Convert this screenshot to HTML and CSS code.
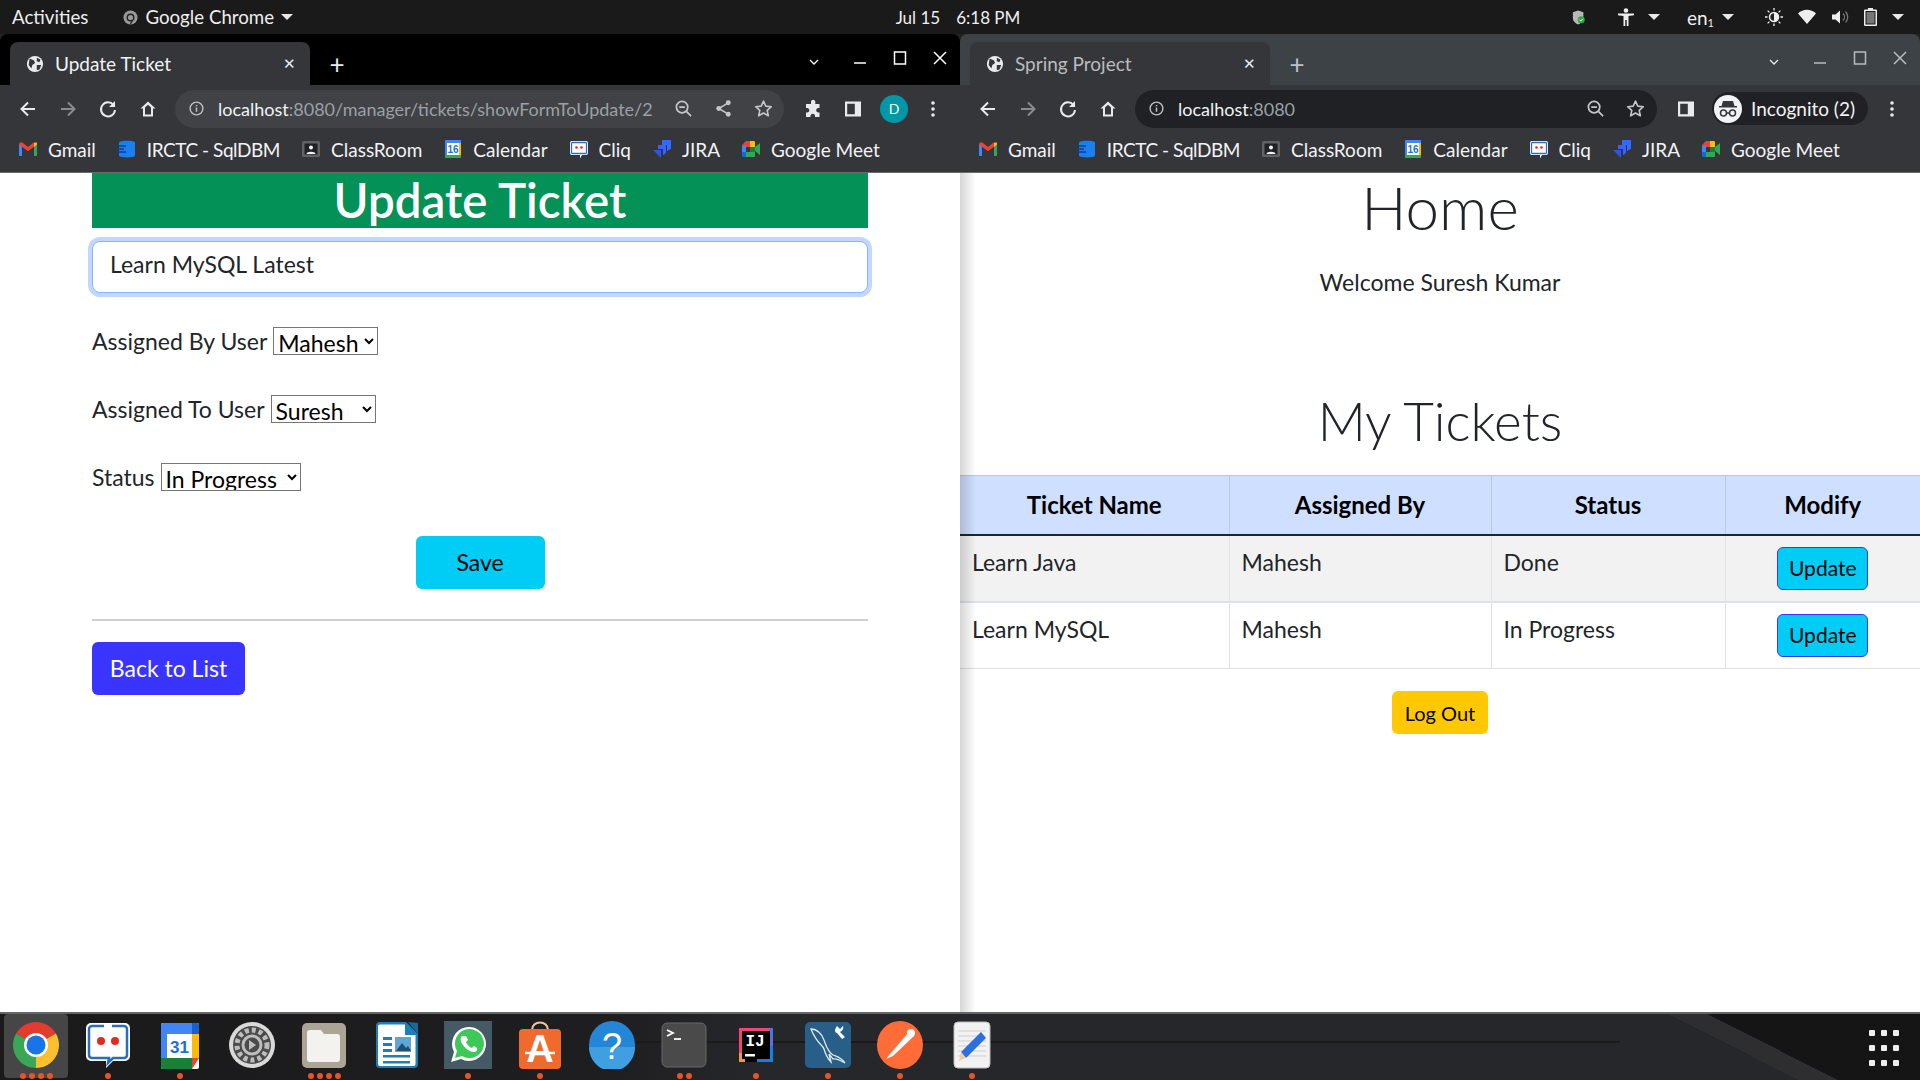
FILE: index.html
```html
<!DOCTYPE html>
<html lang="en">
<head>
  <meta charset="UTF-8">
  <title>Update Ticket</title>
  <link rel="stylesheet" href="styles.css">
</head>
<body>
  <svg class="sprites" aria-hidden="true">
    <symbol id="i-globe" viewBox="0 0 20 20"><circle cx="10" cy="10" r="9" fill="#e8eaed"/><path d="M4 4l5 2 1 3-3 2-1 4-3-4zM12 3l4 2-1 3-3-1zM12 11l5 0-2 5-3 1z" fill="#35363a"/></symbol>
    <symbol id="i-back" viewBox="0 0 20 20"><path d="M17 10H4M10 3.5L3.5 10l6.500 6.500" fill="none" stroke="currentColor" stroke-width="2"/></symbol>
    <symbol id="i-forward" viewBox="0 0 20 20"><path d="M3 10h13M10 3.500l6.500 6.500-6.500 6.500" fill="none" stroke="currentColor" stroke-width="2"/></symbol>
    <symbol id="i-reload" viewBox="0 0 20 20"><path d="M15.500 6A7 7 0 1 0 17 11" fill="none" stroke="currentColor" stroke-width="2"/><path d="M17 2v6h-6z" fill="currentColor"/></symbol>
    <symbol id="i-home" viewBox="0 0 20 20"><path d="M10 2.500L2.500 9.500h2.500v8h10v-8h2.500zM7 15.500v-7l3-2.800 3 2.800v7z" fill="currentColor" fill-rule="evenodd"/></symbol>
    <symbol id="i-info" viewBox="0 0 16 16"><circle cx="8" cy="8" r="6.800" fill="none" stroke="currentColor" stroke-width="1.500"/><path d="M7.200 7h1.600v4.500H7.200zM7.200 4.200h1.600v1.500H7.200z" fill="currentColor"/></symbol>
    <symbol id="i-zoomout" viewBox="0 0 20 20"><circle cx="8.500" cy="8.500" r="6" fill="none" stroke="currentColor" stroke-width="1.800"/><path d="M13 13l5 5M5.500 8.500h6" fill="none" stroke="currentColor" stroke-width="1.800"/></symbol>
    <symbol id="i-share" viewBox="0 0 20 20"><circle cx="15" cy="4" r="2.600" fill="currentColor"/><circle cx="5" cy="10" r="2.600" fill="currentColor"/><circle cx="15" cy="16" r="2.600" fill="currentColor"/><path d="M15 4L5 10l10 6" fill="none" stroke="currentColor" stroke-width="1.600"/></symbol>
    <symbol id="i-star" viewBox="0 0 20 20"><path d="M10 2.200l2.400 5.300 5.800.6-4.300 3.900 1.200 5.700L10 14.800l-5.100 2.900 1.200-5.700L1.800 8.100l5.800-.6z" fill="none" stroke="currentColor" stroke-width="1.700" stroke-linejoin="round"/></symbol>
    <symbol id="i-puzzle" viewBox="0 0 20 20"><path d="M8 2.500a2.200 2.200 0 0 1 4.300 0V5h4.200v4h-1.500a2.300 2.300 0 0 0 0 4.500h1.500v4.500h-4.500v-1.500a2.300 2.300 0 0 0-4.500 0V18H3v-4.500h1.500a2.300 2.300 0 0 0 0-4.500H3V5h5z" fill="currentColor"/></symbol>
    <symbol id="i-panel" viewBox="0 0 20 20"><path d="M2 2.500h16v15H2zM4.200 4.700v10.600h7.600V4.700z" fill="currentColor" fill-rule="evenodd"/></symbol>
    <symbol id="i-dots" viewBox="0 0 20 20"><circle cx="10" cy="4" r="1.800" fill="currentColor"/><circle cx="10" cy="10" r="1.800" fill="currentColor"/><circle cx="10" cy="16" r="1.800" fill="currentColor"/></symbol>
    <symbol id="i-incognito" viewBox="0 0 28 28"><circle cx="14" cy="14" r="14" fill="#f1f3f4"/><path d="M9 6h10l1.500 5H23v1.500H5V11h2.500z" fill="#35363a"/><circle cx="9.500" cy="18" r="3" fill="none" stroke="#35363a" stroke-width="1.500"/><circle cx="18.500" cy="18" r="3" fill="none" stroke="#35363a" stroke-width="1.500"/><path d="M12.500 18h3" stroke="#35363a" stroke-width="1.500"/></symbol>

    <symbol id="b-gmail" viewBox="0 0 20 20"><path d="M1 5.500l3-1V17H2a1 1 0 0 1-1-1z" fill="#4285f4"/><path d="M19 5.500l-3-1V17h2a1 1 0 0 0 1-1z" fill="#34a853"/><path d="M1 5.500C1 3 3.300 2.500 5 4l5 4 5-4c1.700-1.500 4-1 4 1.500l-3 2.300-6 4.500-6-4.500z" fill="#ea4335"/><path d="M16 4l3-.6v2.100L16 8z" fill="#fbbc04"/></symbol>
    <symbol id="b-sqldbm" viewBox="0 0 20 20"><path d="M2 3.500C2 1 18 1 18 3.500v13C18 19 2 19 2 16.500z" fill="#1a7ff0"/><path d="M1 7h8M1 10h6M1 13h8" stroke="#0d3f8f" stroke-width="1.300"/></symbol>
    <symbol id="b-classroom" viewBox="0 0 20 20"><rect x="1" y="2" width="18" height="16" rx="1.500" fill="#5f6368"/><rect x="3.500" y="4.500" width="13" height="11" fill="#202124"/><circle cx="10" cy="8.500" r="2" fill="#f1f3f4"/><path d="M5.500 15c0-3 9-3 9 0z" fill="#f1f3f4"/></symbol>
    <symbol id="b-calendar" viewBox="0 0 20 20"><rect x="2" y="1" width="16" height="18" rx="1" fill="#fff"/><path d="M2 1h16v3H2z" fill="#4285f4"/><path d="M2 4h2v12H2z" fill="#4285f4"/><path d="M16 4h2v12h-2z" fill="#fbbc04"/><path d="M2 16h16v3H2z" fill="#34a853"/><text x="10" y="14" text-anchor="middle" class="cal-day">16</text></symbol>
    <symbol id="b-cliq" viewBox="0 0 20 20"><path d="M3 2h14a2 2 0 0 1 2 2v10a2 2 0 0 1-2 2h-4l-2 3.500V16H3a2 2 0 0 1-2-2V4a2 2 0 0 1 2-2z" fill="#fff"/><path d="M3.500 3.500h13a1 1 0 0 1 1 1v9a1 1 0 0 1-1 1h-13a1 1 0 0 1-1-1v-9a1 1 0 0 1 1-1z" fill="none" stroke="#2a6fc0" stroke-width="1.300"/><circle cx="7.500" cy="8.500" r="1.300" fill="#e02020"/><circle cx="12.500" cy="8.500" r="1.300" fill="#e02020"/></symbol>
    <symbol id="b-jira" viewBox="0 0 20 20"><path d="M10 1h9v9l-4 2V6h-5z" fill="#2f6bff"/><path d="M6 6h8v8l-3 2v-6H6z" fill="#3b62f5"/><path d="M1 11h8v8l-3-3-2-2z" fill="#2c55e8"/></symbol>
    <symbol id="b-meet" viewBox="0 0 20 20"><path d="M5 2h8v6H1V6z" fill="#ea4335"/><path d="M9 2h4a1 1 0 0 1 1 1v5H9z" fill="#fbbc04"/><path d="M1 7h4v6H1z" fill="#4285f4"/><path d="M1 13h4v5H2a1 1 0 0 1-1-1z" fill="#1967d2"/><path d="M5 13h9v4a1 1 0 0 1-1 1H5z" fill="#34a853"/><path d="M9 8h5v5H9z" fill="#188038"/><path d="M14 8l5-4v12l-5-4z" fill="#34a853"/></symbol>
  </svg>

  <div class="desktop">
    <header class="topbar">
      <div class="topbar-left">
        <span>Activities</span>
        <span class="app-menu">
          <svg class="app-icon" viewBox="0 0 16 16"><circle cx="8" cy="8" r="7.500" fill="#9a9a9a"/><circle cx="8" cy="8" r="3.500" fill="none" stroke="#222" stroke-width="1.500"/><path d="M10 11l-2 4" stroke="#222" stroke-width="1.300"/></svg>
          Google Chrome
          <i class="caret"></i>
        </span>
      </div>
      <div class="clock"><span>Jul 15</span><span>6:18 PM</span></div>
      <div class="tray">
        <svg class="tray-shield" viewBox="0 0 16 18"><path d="M1 3l6-2 6 2v7c0 3-3 5.500-6 7-3-1.500-6-4-6-7z" fill="#b8b8b8"/><circle cx="10.500" cy="11.500" r="4" fill="#2fa84f"/><path d="M8.500 11.500l1.500 1.500 2.500-2.500" stroke="#fff" stroke-width="1" fill="none"/></svg>
        <span class="tray-group">
          <svg class="tray-icon" viewBox="0 0 18 18"><circle cx="9" cy="2.500" r="2.300" fill="#eee"/><path d="M1 5.500h16v1.800l-5.500.7V18H9.700v-6H8.300v6H6.500V8L1 7.300z" fill="#eee"/></svg>
          <i class="caret"></i>
        </span>
        <span class="tray-group tray-lang">
          <span class="lang">en<sub>1</sub></span>
          <i class="caret"></i>
        </span>
        <span class="tray-group tray-status">
          <svg class="tray-icon" viewBox="0 0 18 18"><circle cx="9" cy="9" r="4.500" fill="#222" stroke="#eee" stroke-width="1.500"/><path d="M9 4.500a4.500 4.500 0 0 1 0 9z" fill="#eee"/><path d="M9 0v2.500M9 15.500V18M0 9h2.500M15.500 9H18M2.600 2.600l1.800 1.800M13.600 13.600l1.800 1.800M15.400 2.600l-1.800 1.800M4.400 13.600l-1.800 1.800" stroke="#eee" stroke-width="1.300"/></svg>
          <svg class="tray-icon" viewBox="0 0 18 18"><path d="M0 5.500C5 .5 13 .5 18 5.500L9 16z" fill="#eee"/></svg>
          <svg class="tray-icon" viewBox="0 0 18 18"><path d="M1 6.500h3.500L9 2.500v13l-4.500-4H1z" fill="#eee"/><path d="M12 5.500a5 5 0 0 1 0 7M14.500 3.500a8 8 0 0 1 0 11" stroke="#777" stroke-width="1.300" fill="none"/></svg>
          <svg class="tray-battery" viewBox="0 0 13 18"><path d="M4 0h5v1.500h3a1 1 0 0 1 1 1V17a1 1 0 0 1-1 1H1a1 1 0 0 1-1-1V2.500a1 1 0 0 1 1-1h3zM1.500 3v13.500h10V3z" fill="#eee" fill-rule="evenodd"/><path d="M2.500 4h8v11.500h-8z" fill="#777"/></svg>
          <i class="caret"></i>
        </span>
      </div>
    </header>

    <main class="windows">
      <section class="window window-focused">
        <div class="tabstrip">
          <div class="tab">
            <svg class="favicon"><use href="#i-globe"/></svg>
            <span class="tab-title">Update Ticket</span>
            <span class="tab-close">✕</span>
          </div>
          <span class="tab-new">+</span>
          <div class="window-controls">
            <svg class="ctl-chevron" viewBox="0 0 10 6"><path d="M1 1l4 4 4-4" fill="none" stroke="currentColor" stroke-width="1.300"/></svg>
            <svg class="ctl" viewBox="0 0 14 14"><path d="M1 12h12" stroke="currentColor" stroke-width="1.500"/></svg>
            <svg class="ctl" viewBox="0 0 14 14"><path d="M1.500 1h11v12h-11z" fill="none" stroke="currentColor" stroke-width="1.500"/></svg>
            <svg class="ctl" viewBox="0 0 14 14"><path d="M1 1l12 12M13 1L1 13" stroke="currentColor" stroke-width="1.500"/></svg>
          </div>
        </div>
        <div class="toolbar">
          <svg class="nav-btn"><use href="#i-back"/></svg>
          <svg class="nav-btn nav-off"><use href="#i-forward"/></svg>
          <svg class="nav-btn"><use href="#i-reload"/></svg>
          <svg class="nav-btn"><use href="#i-home"/></svg>
          <div class="omnibox">
            <svg class="omni-info"><use href="#i-info"/></svg>
            <span class="url"><b>localhost</b>:8080/manager/tickets/showFormToUpdate/2</span>
            <svg class="omni-btn"><use href="#i-zoomout"/></svg>
            <svg class="omni-btn"><use href="#i-share"/></svg>
            <svg class="omni-btn"><use href="#i-star"/></svg>
          </div>
          <svg class="tool-btn tool-puzzle"><use href="#i-puzzle"/></svg>
          <svg class="tool-btn"><use href="#i-panel"/></svg>
          <span class="avatar">D</span>
          <svg class="tool-btn"><use href="#i-dots"/></svg>
        </div>
        <nav class="bookmarks">
          <span class="bookmark"><svg><use href="#b-gmail"/></svg>Gmail</span>
          <span class="bookmark bookmark-tight"><svg><use href="#b-sqldbm"/></svg>IRCTC - SqlDBM</span>
          <span class="bookmark"><svg><use href="#b-classroom"/></svg>ClassRoom</span>
          <span class="bookmark"><svg><use href="#b-calendar"/></svg>Calendar</span>
          <span class="bookmark"><svg><use href="#b-cliq"/></svg>Cliq</span>
          <span class="bookmark"><svg><use href="#b-jira"/></svg>JIRA</span>
          <span class="bookmark"><svg><use href="#b-meet"/></svg>Google Meet</span>
        </nav>
        <div class="page page-form">
          <h1 class="form-title">Update Ticket</h1>
          <input class="form-input" type="text" value="Learn MySQL Latest">
          <div class="form-row">
            <label>Assigned By User</label>
            <select class="select-user"><option>Mahesh</option></select>
          </div>
          <div class="form-row">
            <label>Assigned To User</label>
            <select class="select-user"><option>Suresh</option></select>
          </div>
          <div class="form-row">
            <label>Status</label>
            <select class="select-status"><option>In Progress</option></select>
          </div>
          <button class="btn btn-save" type="button">Save</button>
          <hr class="form-rule">
          <button class="btn btn-back" type="button">Back to List</button>
        </div>
      </section>

      <section class="window window-incognito">
        <div class="tabstrip">
          <div class="tab">
            <svg class="favicon"><use href="#i-globe"/></svg>
            <span class="tab-title">Spring Project</span>
            <span class="tab-close">✕</span>
          </div>
          <span class="tab-new">+</span>
          <div class="window-controls">
            <svg class="ctl-chevron" viewBox="0 0 10 6"><path d="M1 1l4 4 4-4" fill="none" stroke="#e8eaed" stroke-width="1.300"/></svg>
            <svg class="ctl" viewBox="0 0 14 14"><path d="M1 12h12" stroke="currentColor" stroke-width="1.500"/></svg>
            <svg class="ctl" viewBox="0 0 14 14"><path d="M1.500 1h11v12h-11z" fill="none" stroke="currentColor" stroke-width="1.500"/></svg>
            <svg class="ctl" viewBox="0 0 14 14"><path d="M1 1l12 12M13 1L1 13" stroke="currentColor" stroke-width="1.500"/></svg>
          </div>
        </div>
        <div class="toolbar">
          <svg class="nav-btn"><use href="#i-back"/></svg>
          <svg class="nav-btn nav-off"><use href="#i-forward"/></svg>
          <svg class="nav-btn"><use href="#i-reload"/></svg>
          <svg class="nav-btn"><use href="#i-home"/></svg>
          <div class="omnibox omnibox-dark">
            <svg class="omni-info"><use href="#i-info"/></svg>
            <span class="url"><b>localhost</b>:8080</span>
            <svg class="omni-btn"><use href="#i-zoomout"/></svg>
            <svg class="omni-btn"><use href="#i-star"/></svg>
          </div>
          <svg class="tool-btn tool-panel"><use href="#i-panel"/></svg>
          <span class="incognito-pill"><svg><use href="#i-incognito"/></svg>Incognito (2)</span>
          <svg class="tool-btn"><use href="#i-dots"/></svg>
        </div>
        <nav class="bookmarks">
          <span class="bookmark"><svg><use href="#b-gmail"/></svg>Gmail</span>
          <span class="bookmark bookmark-tight"><svg><use href="#b-sqldbm"/></svg>IRCTC - SqlDBM</span>
          <span class="bookmark"><svg><use href="#b-classroom"/></svg>ClassRoom</span>
          <span class="bookmark"><svg><use href="#b-calendar"/></svg>Calendar</span>
          <span class="bookmark"><svg><use href="#b-cliq"/></svg>Cliq</span>
          <span class="bookmark"><svg><use href="#b-jira"/></svg>JIRA</span>
          <span class="bookmark"><svg><use href="#b-meet"/></svg>Google Meet</span>
        </nav>
        <div class="page page-home">
          <h1 class="home-title">Home</h1>
          <p class="welcome">Welcome Suresh Kumar</p>
          <h2 class="tickets-title">My Tickets</h2>
          <table class="tickets">
            <thead>
              <tr>
                <th class="col-name">Ticket Name</th>
                <th class="col-by">Assigned By</th>
                <th class="col-status">Status</th>
                <th>Modify</th>
              </tr>
            </thead>
            <tbody>
              <tr class="row-odd">
                <td>Learn Java</td>
                <td>Mahesh</td>
                <td>Done</td>
                <td class="cell-action"><button class="btn btn-update" type="button">Update</button></td>
              </tr>
              <tr>
                <td>Learn MySQL</td>
                <td>Mahesh</td>
                <td>In Progress</td>
                <td class="cell-action"><button class="btn btn-update" type="button">Update</button></td>
              </tr>
            </tbody>
          </table>
          <button class="btn btn-logout" type="button">Log Out</button>
        </div>
      </section>
    </main>

    <footer class="dock">
      <div class="dock-item dock-active">
        <svg viewBox="0 0 48 48"><path d="M24 24L4.100 12.500A23 23 0 0 1 43.900 12.500z" fill="#e33b2e"/><path d="M24 24L43.900 12.500A23 23 0 0 1 24 47z" fill="#fbc02d"/><path d="M24 24V47A23 23 0 0 1 4.100 12.500z" fill="#3aa757"/><circle cx="24" cy="24" r="12" fill="#fff"/><circle cx="24" cy="24" r="9.500" fill="#1a73e8"/></svg>
        <div class="pips"><i></i><i></i><i></i><i></i></div>
      </div>
      <div class="dock-item">
        <svg viewBox="0 0 48 48"><path d="M7 2h34a5 5 0 0 1 5 5v28a5 5 0 0 1-5 5H29l-7 7v-7H7a5 5 0 0 1-5-5V7a5 5 0 0 1 5-5z" fill="#fff"/><path d="M20 5H8a3 3 0 0 0-3 3v26a3 3 0 0 0 3 3h17l-1 5 5-5h11a3 3 0 0 0 3-3V8a3 3 0 0 0-3-3H28" fill="none" stroke="#2a6fb5" stroke-width="2.500"/><circle cx="17" cy="20" r="4" fill="#e02b20"/><circle cx="31" cy="20" r="4" fill="#e02b20"/></svg>
        <div class="pips"><i></i></div>
      </div>
      <div class="dock-item">
        <svg viewBox="0 0 48 48"><rect x="5" y="2" width="38" height="46" rx="2" fill="#fff"/><path d="M5 4a2 2 0 0 1 2-2h29v11H5z" fill="#4285f4"/><path d="M36 2h5a2 2 0 0 1 2 2v9h-7z" fill="#1a5fd0"/><path d="M5 13h6v24H5z" fill="#4285f4"/><path d="M36 13h7v24h-7z" fill="#fbbc04"/><path d="M5 37h31v11H7a2 2 0 0 1-2-2z" fill="#188038"/><path d="M36 37h7L36 48z" fill="#ea4335"/><text x="23.500" y="32" text-anchor="middle" class="dock-cal">31</text></svg>
        <div class="pips"><i></i></div>
      </div>
      <div class="dock-item">
        <svg viewBox="0 0 48 48"><circle cx="24" cy="24" r="23" fill="#d9d9d9"/><circle cx="24" cy="24" r="19" fill="#4a4a4a"/><circle cx="24" cy="24" r="15" fill="none" stroke="#bdbdbd" stroke-width="5" stroke-dasharray="4 3"/><circle cx="24" cy="24" r="9" fill="none" stroke="#bdbdbd" stroke-width="3"/><path d="M21 19l7 5-7 5z" fill="#bdbdbd"/></svg>
        <div class="pips"></div>
      </div>
      <div class="dock-item">
        <svg viewBox="0 0 48 48"><rect x="2" y="2" width="44" height="45" rx="5" fill="#aca595"/><path d="M7 12a3 3 0 0 1 3-3h11l3 4h13a3 3 0 0 1 3 3v22a3 3 0 0 1-3 3H10a3 3 0 0 1-3-3z" fill="#f3f2ef"/></svg>
        <div class="pips"><i></i><i></i><i></i><i></i></div>
      </div>
      <div class="dock-item">
        <svg viewBox="0 0 48 48"><path d="M8 1h26l12 12v30a4 4 0 0 1-4 4H8a4 4 0 0 1-4-4V5a4 4 0 0 1 4-4z" fill="#1d7fba"/><path d="M8 3.500h25V14h10.500v29a2 2 0 0 1-2 2H8a2 2 0 0 1-2-2V5.500a2 2 0 0 1 2-2z" fill="#fff"/><path d="M36 1l10 1v11z" fill="#18699c"/><path d="M11 16h9v3h-9zM11 22h9v3h-9zM11 28h9v3h-9zM11 34h27v2.500H11zM11 40h27v2.500H11z" fill="#1d7fba"/><rect x="23" y="16" width="16" height="15" fill="#5fa6d3"/><path d="M24 30l6-8 4 5 2-2 3 5z" fill="#1a4f78"/></svg>
        <div class="pips"></div>
      </div>
      <div class="dock-item">
        <svg viewBox="0 0 48 48"><rect width="48" height="48" fill="#455a64"/><path d="M7 41l3-10a17 17 0 1 1 7 7z" fill="#fff"/><path d="M11 37l2-7a14.500 14.500 0 1 1 5 5z" fill="#3ec857"/><path d="M18 15c-2 2-2 5 1 9s7 7 11 7c2 0 4-2 3-4l-3-2-2 2c-3-1-5-4-6-6l2-2-2-4z" fill="#fff"/></svg>
        <div class="pips"><i></i></div>
      </div>
      <div class="dock-item">
        <svg viewBox="0 0 48 48"><path d="M16 9c0-10 16-10 16 0" fill="none" stroke="#e8c89a" stroke-width="2"/><rect x="3" y="8" width="42" height="40" rx="4" fill="#ef6a2c"/><text x="24" y="41" text-anchor="middle" class="dock-store">A</text><path d="M9 32h30" stroke="#fff" stroke-width="2.500"/></svg>
        <div class="pips"><i></i></div>
      </div>
      <div class="dock-item">
        <svg viewBox="0 0 48 48"><ellipse cx="24" cy="24" rx="23" ry="24" fill="#2386d6"/><path d="M1 26h46a23 24 0 0 1-46 0z" fill="#3f9fe0"/><text x="24" y="38" text-anchor="middle" class="dock-help">?</text></svg>
        <div class="pips"></div>
      </div>
      <div class="dock-item">
        <svg viewBox="0 0 48 48"><rect x="2" y="2" width="44" height="44" rx="5" fill="#4a4a4a" stroke="#666"/><path d="M7 9l6 3-6 3" fill="none" stroke="#fff" stroke-width="1.800"/><path d="M14 18h7" stroke="#fff" stroke-width="1.800"/></svg>
        <div class="pips"><i></i><i></i></div>
      </div>
      <div class="dock-item">
        <svg viewBox="0 0 48 48"><rect x="7" y="7" width="34" height="34" fill="#000"/><path d="M7 7h30v3H10v22H7z" fill="#f0457b"/><path d="M7 32h3v6h3v3H7z" fill="#e59b3e"/><path d="M37 7h4v18h-3V10h-1z" fill="#5a6fe0"/><path d="M38 25h3v16H25v-3h13z" fill="#1080f0"/><text x="23" y="25" text-anchor="middle" class="dock-ij">IJ</text><path d="M13 33h10v2.500H13z" fill="#fff"/></svg>
        <div class="pips"><i></i></div>
      </div>
      <div class="dock-item">
        <svg viewBox="0 0 48 48"><rect x="1" y="1" width="46" height="46" rx="5" fill="#285f88"/><path d="M7 8c6 0 11 5 13 11 2 5 3 11 9 15 5 2 9 3 12 8-5-3-9-5-12-4l-4-5 2 8c-5-5-6-10-7-13-2-5-7-5-13-20z" fill="none" stroke="#dfe9ef" stroke-width="1.300"/><path d="M33 5l3 3 3-3c1 3-1 5-3 6l5 5-3 2-5-6c-2 0-3-3 0-7z" fill="#fff"/></svg>
        <div class="pips"><i></i></div>
      </div>
      <div class="dock-item">
        <svg viewBox="0 0 48 48"><ellipse cx="24" cy="24" rx="23" ry="24" fill="#ff6c37"/><path d="M33 11L14 33l-4 5 7-3 21-20z" fill="#fff"/><circle cx="35" cy="12" r="4" fill="#fff"/></svg>
        <div class="pips"><i></i></div>
      </div>
      <div class="dock-item">
        <svg viewBox="0 0 48 48"><rect x="6" y="1" width="36" height="46" rx="4" fill="#f2f2f2" stroke="#bbb"/><path d="M10 10h28M10 15h28M10 20h28M10 25h28M10 30h28M10 35h28" stroke="#cfcfcf"/><path d="M33 11l5 6-20 20-5-6z" fill="#2d6fe0"/><path d="M13 31l5 6-7 3z" fill="#f0d0a0"/></svg>
        <div class="pips"><i></i></div>
      </div>
      <div class="app-grid">
        <i></i><i></i><i></i><i></i><i></i><i></i><i></i><i></i><i></i>
      </div>
    </footer>
  </div>
</body>
</html>
```

FILE: styles.css
```css
* { box-sizing: border-box; }
html, body { margin: 0; height: 100%; overflow: hidden; }
body { font-family: "Lato", "Noto Sans", sans-serif; color: #212529; background: #222; }
.sprites { display: none; }
.desktop { width: 1920px; height: 1080px; display: flex; flex-direction: column; }

/* gnome top bar */
.topbar { height: 34px; flex: none; background: #1a1a1a; color: #eee; display: grid; grid-template-columns: 1fr auto 1fr; align-items: center; padding: 0 16px 0 12px; font-size: 18.7px; }
.topbar-left { display: flex; align-items: center; gap: 35px; }
.app-menu { display: flex; align-items: center; gap: 7px; }
.app-icon { width: 15px; height: 15px; }
.caret { display: inline-block; width: 0; height: 0; border-left: 6px solid transparent; border-right: 6px solid transparent; border-top: 6px solid #e8e8e8; }
.clock { display: flex; gap: 16px; font-size: 17px; }
.tray { display: flex; align-items: center; justify-content: flex-end; gap: 31px; }
.tray-shield { width: 14px; height: 17px; }
.tray-group { display: flex; align-items: center; gap: 13px; }
.tray-lang { gap: 8px; margin-left: -4px; }
.tray-status { gap: 15px; }
.tray-icon { width: 18px; height: 18px; }
.tray-battery { width: 13px; height: 18px; }
.lang { font-size: 19px; line-height: 1; }
.lang sub { font-size: 11px; vertical-align: -2px; line-height: 0; }

/* browser windows */
.windows { flex: 1; display: flex; min-height: 0; }
.window { width: 960px; display: flex; flex-direction: column; position: relative; }
.tabstrip { height: 51px; flex: none; display: flex; align-items: flex-end; padding-left: 10px; border-radius: 8px 8px 0 0; }
.window-focused .tabstrip { background: #000; color: #fff; }
.window-incognito .tabstrip { background: #3c4245; color: #b9bcbe; }
.tab { width: 300px; height: 43px; background: #35363a; border-radius: 8px 8px 0 0; display: flex; align-items: center; padding: 0 14px 0 16px; font-size: 19px; }
.favicon { width: 18px; height: 18px; margin-right: 11px; flex: none; }
.tab-title { flex: 1; }
.window-focused .tab-title { color: #f1f3f4; }
.tab-close { font-size: 15px; color: #e8eaed; }
.tab-new { width: 54px; height: 43px; display: flex; align-items: center; justify-content: center; font-size: 26px; color: #e8eaed; }
.window-incognito .tab-new { color: #c0c3c5; }
.window-controls { margin-left: auto; height: 51px; padding: 0 13px 3px 0; display: flex; align-items: center; gap: 26px; }
.ctl { width: 14px; height: 14px; }
.ctl-chevron { width: 10px; height: 6px; margin-top: 8px; margin-right: 8px; }
.toolbar { height: 43px; flex: none; background: #35363a; display: flex; align-items: center; padding: 4px 16px 0 18px; color: #e8eaed; }
.nav-btn { width: 20px; height: 20px; margin-right: 20px; flex: none; }
.nav-off { color: #8a8b8e; }
.omnibox { height: 38px; margin-left: -3px; width: 609px; border-radius: 19px; background: #414245; display: flex; align-items: center; padding: 0 12px 0 14px; margin-right: 19px; flex: none; }
.omnibox-dark { background: #202124; width: 522px; }
.omni-info { width: 15px; height: 15px; color: #bdc1c6; margin-right: 14px; flex: none; }
.url { flex: 1; font-size: 18px; color: #9aa0a6; white-space: nowrap; }
.url b { font-weight: 400; color: #f1f3f4; }
.omni-btn { width: 19px; height: 19px; margin-left: 21px; color: #c4c7c9; flex: none; }
.tool-btn { width: 20px; height: 20px; flex: none; }
.tool-puzzle { margin-right: 20px; }
.tool-panel { margin-left: 0; margin-right: 16px; }
.avatar { width: 28px; height: 28px; border-radius: 50%; background: #0097a7; color: #fff; font-size: 14px; display: flex; align-items: center; justify-content: center; margin: 0 15px 0 17px; flex: none; }
.incognito-pill { height: 33px; width: 156px; border-radius: 17px; background: #202124; display: flex; align-items: center; gap: 9px; padding-left: 2px; margin-right: 14px; font-size: 19px; color: #f1f3f4; flex: none; white-space: nowrap; }
.incognito-pill svg { width: 28px; height: 28px; flex: none; }
.bookmarks { height: 44px; flex: none; background: #35363a; display: flex; align-items: center; gap: 21px; padding: 0 0 2px 18px; color: #f1f3f4; font-size: 19px; }
.bookmark { display: flex; align-items: center; gap: 10px; white-space: nowrap; }
.bookmark-tight { letter-spacing: -.45px; }
.bookmark svg { width: 20px; height: 20px; flex: none; }
.cal-day { font: 700 10px "Liberation Sans", sans-serif; fill: #1a73e8; }

/* left page: ticket form */
.page { flex: 1; background: #fff; border-top: 1px solid #6a6a6a; }
.page-form { padding: 0 92px; }
.form-title { margin: 0; height: 55px; background: #049157; color: #fff; font-size: 47.500px; font-weight: 600; line-height: 54px; text-align: center; }
.form-input { display: block; width: 100%; height: 52px; margin-top: 13px; padding: 0 17px 6px; font: inherit; font-size: 23px; color: #212529; background: #fff; border: 1px solid #86b7fe; border-radius: 8px; box-shadow: 0 0 0 4px #c2d7fd; outline: none; }
.form-row { display: flex; align-items: center; gap: 6px; height: 28px; margin-top: 34px; font-size: 23px; }
.form-row + .form-row { margin-top: 40px; }
select { height: 28px; font: inherit; font-size: 23px; color: #000; background: #fff; border: 1px solid #767676; padding: 0; }
.select-user { width: 105px; }
.select-status { width: 140px; }
.btn { display: block; border: 1px solid transparent; border-radius: 6px; font: inherit; font-size: 23px; padding: 0; cursor: pointer; }
.btn-save { width: 129px; height: 53px; margin: 45px auto 0; padding-bottom: 2px; background: #00cdf6; color: #000; }
.form-rule { margin: 30px 0 0; border: 0; border-top: 2px solid #cfcfcf; }
.btn-back { width: 153px; height: 53px; margin-top: 21px; padding-bottom: 2px; background: #3a34ff; color: #fff; }

/* right page: home and tickets */
.page-home { display: flex; flex-direction: column; align-items: center; position: relative; }
.page-home::after { content: ""; position: absolute; left: 0; top: 0; bottom: 0; width: 16px; background: linear-gradient(90deg, rgba(0,0,0,.16), rgba(0,0,0,0)); pointer-events: none; }
.home-title { margin: -3px 0 0; height: 74px; font-size: 60px; font-weight: 300; line-height: 74px; }
.welcome { margin: 1px 0 0; height: 60px; padding-top: 22px; font-size: 23px; line-height: 30px; color: #212529; }
.tickets-title { margin: 80px 0 0; height: 72px; font-size: 53px; font-weight: 300; line-height: 72px; }
.tickets { width: 960px; margin-top: 18px; border-collapse: collapse; table-layout: fixed; font-size: 23px; }
.tickets th, .tickets td { border: 1px solid #dee2e6; padding: 8px 12px; vertical-align: top; }
.tickets tr > :first-child { border-left: 0; }
.tickets tr > :last-child { border-right: 0; }
.tickets thead th { height: 59px; background: #cfdfff; border-color: #b9c8e6; border-bottom: 2px solid #212529; font-size: 24px; font-weight: 700; color: #000; vertical-align: middle; }
.col-name { width: 269px; }
.col-by { width: 262px; }
.col-status { width: 234px; }
.tickets tbody tr { height: 67px; }
.tickets tbody td { line-height: 36px; }
.tickets .row-odd td { background: #f2f2f2; }
.tickets .row-odd td { border-bottom-width: 2px; }
.cell-action { text-align: center; }
.btn-update { width: 91px; height: 43px; margin: 3px auto 0; background: #00cdf6; border-color: #3a34ff; color: #000; font-size: 21px; }
.btn-logout { width: 96px; height: 43px; margin-top: 22px; background: #ffc800; color: #000; font-size: 20px; }

/* dock */
.dock { height: 68px; flex: none; display: flex; align-items: flex-start; border-top: 2px solid #666; background: linear-gradient(180deg, transparent 27px, #1b1919 27px, #1b1919 29px, transparent 29px) 620px 0 / 1000px 100% no-repeat, linear-gradient(26.6deg, rgba(0,0,0,0) 87.700%, #2e2e30 87.700%, #2e2e30 89.600%, #151516 89.600%), linear-gradient(90deg, #1a1a1b, #1e1e20 600px, #26272a 760px); }
.dock-item { width: 72px; height: 64px; padding-top: 7px; display: flex; flex-direction: column; align-items: center; flex: none; border-radius: 4px; }
.dock-item svg { width: 48px; height: 48px; flex: none; }
.dock-active { width: 64px; margin: 0 4px; background: #464646; }
.pips { display: flex; gap: 3px; margin-top: 4px; }
.pips i { width: 6px; height: 6px; border-radius: 50%; background: #e95420; }
.dock-cal { font: 700 17px "Liberation Sans", sans-serif; fill: #1a6fd8; }
.dock-store { font: 700 38px "Liberation Sans", sans-serif; fill: #fff; }
.dock-help { font: 400 36px "Liberation Sans", sans-serif; fill: #fff; }
.dock-ij { font: 700 16px "Liberation Mono", monospace; fill: #fff; }
.app-grid { margin: 16px 21px 0 auto; display: grid; grid-template-columns: repeat(3, 6px); grid-auto-rows: 6px; column-gap: 6px; row-gap: 9px; }
.app-grid i { background: #eee; border-radius: 1px; }
```
